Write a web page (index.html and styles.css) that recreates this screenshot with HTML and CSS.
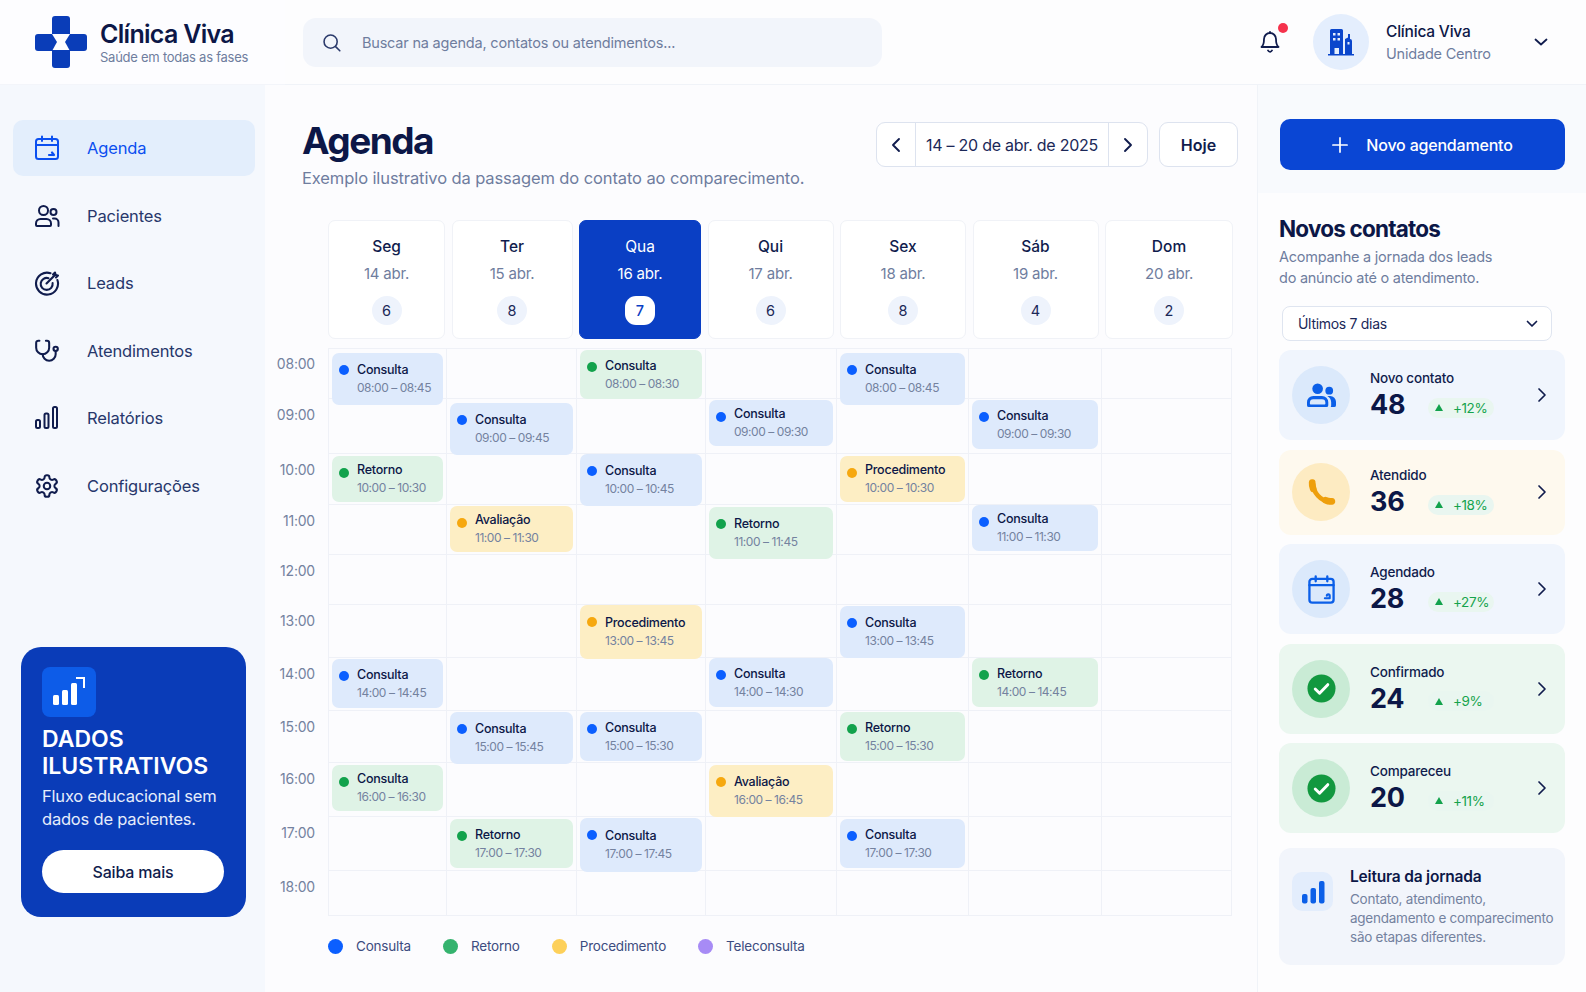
FILE: index.html
```html
<!DOCTYPE html>
<html lang="pt-BR">
<head>
  <meta charset="UTF-8">
  <meta name="viewport" content="width=device-width, initial-scale=1.0">
  <title>Clínica Viva - Agenda</title>
  <link rel="stylesheet" href="styles.css">
</head>
<body>
<header class="top">
  <div class="brand">
    <svg class="logo" viewBox="0 0 52 52" fill="#0a3db8">
      <path d="M17 3a3 3 0 0 1 3-3h12a3 3 0 0 1 3 3v15H17z"/>
      <path d="M17 34h18v15a3 3 0 0 1-3 3H20a3 3 0 0 1-3-3z"/>
      <path d="M0 21a3 3 0 0 1 3-3h14l5 8-5 9H3a3 3 0 0 1-3-3z"/>
      <path d="M52 21a3 3 0 0 0-3-3H35l-5 8 5 9h14a3 3 0 0 0 3-3z"/>
    </svg>
    <div>
      <div class="brand-name">Clínica Viva</div>
      <div class="brand-sub">Saúde em todas as fases</div>
    </div>
  </div>
  <div class="topbar">
    <div class="search">
      <svg class="ic-search" viewBox="0 0 24 24" fill="none" stroke="#2b3a6b" stroke-width="1.8" stroke-linecap="round"><circle cx="11" cy="11" r="7.5"/><path d="m17 17 4.5 4.5"/></svg>
      <span>Buscar na agenda, contatos ou atendimentos...</span>
    </div>
    <div class="bell">
      <svg viewBox="0 0 24 24" fill="none" stroke="#101c4d" stroke-width="1.8" stroke-linecap="round" stroke-linejoin="round"><path d="M6 9a6 6 0 0 1 12 0c0 6 2.500 8 2.500 8h-17S6 15 6 9"/><path d="M10 20.500a2.200 2.200 0 0 0 4 0"/><path d="M12 3V1.800"/></svg>
      <i class="bell-dot"></i>
    </div>
    <div class="avatar">
      <svg viewBox="0 0 26 28" fill="#0a46cc"><path d="M2 2.500A1.500 1.500 0 0 1 3.500 1h10A1.500 1.500 0 0 1 15 2.500V26h-4v-6H6.500v6H2z"/><path d="M17 11l3-1.500V6h2v5a2 2 0 0 1 2 2v13h-7z"/><path d="M0 26h26v1.500H0z"/><g fill="#e4eefd"><rect x="5" y="5" width="2.500" height="2.500"/><rect x="9.500" y="5" width="2.500" height="2.500"/><rect x="5" y="10" width="2.500" height="2.500"/><rect x="9.500" y="10" width="2.500" height="2.500"/><rect x="19.500" y="14" width="2" height="2.500"/></g></svg>
    </div>
    <div class="unit">
      <div class="unit-name">Clínica Viva</div>
      <div class="unit-sub">Unidade Centro</div>
    </div>
    <svg class="unit-chev" viewBox="0 0 14 8" fill="none" stroke="#101c4d" stroke-width="1.8" stroke-linecap="round" stroke-linejoin="round"><path d="m1.500 1.500 5.500 5 5.500-5"/></svg>
  </div>
</header>

<div class="layout">
  <aside class="sidebar">
    <nav class="nav">
      <a class="nav-item active">
        <svg viewBox="0 0 26 26" fill="none" stroke="currentColor" stroke-width="2" stroke-linecap="round" stroke-linejoin="round"><rect x="2" y="4" width="22" height="20" rx="2.500"/><path d="M2 10h22M8 1.500V6M18 1.500V6"/><path d="M15 20h5M18 17.500 20 20" stroke-width="2.200"/></svg>
        Agenda
      </a>
      <a class="nav-item">
        <svg viewBox="0 0 26 26" fill="none" stroke="currentColor" stroke-width="2" stroke-linecap="round" stroke-linejoin="round"><circle cx="9.500" cy="7.500" r="4.500"/><circle cx="19.500" cy="9" r="3"/><path d="M2 22v-1.500A4.500 4.500 0 0 1 6.500 16h6a4.500 4.500 0 0 1 4.500 4.500V22a1 1 0 0 1-1 1H3a1 1 0 0 1-1-1z"/><path d="M19 15.500h1.500a4 4 0 0 1 4 4V23"/></svg>
        Pacientes
      </a>
      <a class="nav-item">
        <svg viewBox="0 0 26 26" fill="none" stroke="currentColor" stroke-width="2.100" stroke-linecap="round" stroke-linejoin="round"><path d="M16.500 3.200A11 11 0 1 0 23.400 10"/><path d="M14.500 8.200A6 6 0 1 0 18.600 13"/><path d="M12.500 13.500 21.500 4.500"/><path d="M19 4.500 21 2.500l.5 2.500 2.500.5-2 2"/></svg>
        Leads
      </a>
      <a class="nav-item">
        <svg viewBox="0 0 24 24" fill="none" stroke="currentColor" stroke-width="1.900" stroke-linecap="round" stroke-linejoin="round"><path d="M5 2.500H4a2 2 0 0 0-2 2V9a6 6 0 0 0 12 0V4.500a2 2 0 0 0-2-2h-1"/><path d="M8 15a6 6 0 0 0 12 0v-3"/><circle cx="20" cy="10" r="2"/></svg>
        Atendimentos
      </a>
      <a class="nav-item">
        <svg viewBox="0 0 26 26" fill="none" stroke="#101c4d" stroke-width="2" stroke-linejoin="round"><rect x="2" y="15" width="4" height="8" rx="1.500"/><rect x="10.500" y="8.500" width="4" height="14.500" rx="1.500"/><rect x="19" y="2" width="4" height="21" rx="1.500"/></svg>
        Relatórios
      </a>
      <a class="nav-item">
        <svg viewBox="0 0 24 24" fill="none" stroke="#101c4d" stroke-width="1.900" stroke-linecap="round" stroke-linejoin="round"><path d="M12.220 2h-.44a2 2 0 0 0-2 2v.18a2 2 0 0 1-1 1.730l-.43.25a2 2 0 0 1-2 0l-.15-.08a2 2 0 0 0-2.730.73l-.22.38a2 2 0 0 0 .73 2.730l.15.1a2 2 0 0 1 1 1.720v.51a2 2 0 0 1-1 1.740l-.15.09a2 2 0 0 0-.73 2.730l.22.38a2 2 0 0 0 2.730.73l.15-.08a2 2 0 0 1 2 0l.43.25a2 2 0 0 1 1 1.730V20a2 2 0 0 0 2 2h.44a2 2 0 0 0 2-2v-.18a2 2 0 0 1 1-1.730l.43-.25a2 2 0 0 1 2 0l.15.08a2 2 0 0 0 2.730-.73l.22-.39a2 2 0 0 0-.73-2.730l-.15-.08a2 2 0 0 1-1-1.740v-.5a2 2 0 0 1 1-1.740l.15-.09a2 2 0 0 0 .73-2.730l-.22-.38a2 2 0 0 0-2.730-.73l-.15.08a2 2 0 0 1-2 0l-.43-.25a2 2 0 0 1-1-1.730V4a2 2 0 0 0-2-2z"/><circle cx="12" cy="12" r="3"/></svg>
        Configurações
      </a>
    </nav>
    <div class="promo">
      <div class="promo-icon">
        <svg viewBox="0 0 34 30" fill="#fff"><rect x="1" y="18" width="6" height="10" rx="1.500"/><rect x="10" y="13" width="6" height="15" rx="1.500"/><rect x="19" y="6" width="6" height="22" rx="1.500"/><path d="M24 0h9v11h-2V2h-7z"/></svg>
      </div>
      <h3 class="promo-title">DADOS ILUSTRATIVOS</h3>
      <p class="promo-text">Fluxo educacional sem dados de pacientes.</p>
      <button class="promo-btn">Saiba mais</button>
    </div>
  </aside>

  <main class="main">
    <div class="page-head">
      <div>
        <h1>Agenda</h1>
        <p class="page-sub">Exemplo ilustrativo da passagem do contato ao comparecimento.</p>
      </div>
      <div class="date-tools">
        <div class="date-nav">
          <button class="date-arrow"><svg viewBox="0 0 10 16" fill="none" stroke="#101c4d" stroke-width="1.900" stroke-linecap="round" stroke-linejoin="round"><path d="M8 2 2 8l6 6"/></svg></button>
          <div class="date-range">14 – 20 de abr. de 2025</div>
          <button class="date-arrow"><svg viewBox="0 0 10 16" fill="none" stroke="#101c4d" stroke-width="1.900" stroke-linecap="round" stroke-linejoin="round"><path d="m2 2 6 6-6 6"/></svg></button>
        </div>
        <button class="today">Hoje</button>
      </div>
    </div>

    <div class="days">
      <div class="day"><b>Seg</b><span>14 abr.</span><i>6</i></div>
      <div class="day"><b>Ter</b><span>15 abr.</span><i>8</i></div>
      <div class="day current"><b>Qua</b><span>16 abr.</span><i>7</i></div>
      <div class="day"><b>Qui</b><span>17 abr.</span><i>6</i></div>
      <div class="day"><b>Sex</b><span>18 abr.</span><i>8</i></div>
      <div class="day"><b>Sáb</b><span>19 abr.</span><i>4</i></div>
      <div class="day"><b>Dom</b><span>20 abr.</span><i>2</i></div>
    </div>

    <div class="calendar">
      <div class="hour">08:00</div>
      <div class="cell"><div class="ev blue t4 h-l"><b>Consulta</b><span>08:00 – 08:45</span></div></div>
      <div class="cell"></div>
      <div class="cell"><div class="ev green t1 h-m"><b>Consulta</b><span>08:00 – 08:30</span></div></div>
      <div class="cell"></div>
      <div class="cell"><div class="ev blue t4 h-l"><b>Consulta</b><span>08:00 – 08:45</span></div></div>
      <div class="cell"></div>
      <div class="cell"></div>

      <div class="hour">09:00</div>
      <div class="cell"></div>
      <div class="cell"><div class="ev blue t4 h-l"><b>Consulta</b><span>09:00 – 09:45</span></div></div>
      <div class="cell"></div>
      <div class="cell"><div class="ev blue t1 h-s"><b>Consulta</b><span>09:00 – 09:30</span></div></div>
      <div class="cell"></div>
      <div class="cell"><div class="ev blue t1 h-m"><b>Consulta</b><span>09:00 – 09:30</span></div></div>
      <div class="cell"></div>

      <div class="hour">10:00</div>
      <div class="cell"><div class="ev green t2 h-s"><b>Retorno</b><span>10:00 – 10:30</span></div></div>
      <div class="cell"></div>
      <div class="cell"><div class="ev blue t0 h-l"><b>Consulta</b><span>10:00 – 10:45</span></div></div>
      <div class="cell"></div>
      <div class="cell"><div class="ev amber t2 h-s"><b>Procedimento</b><span>10:00 – 10:30</span></div></div>
      <div class="cell"></div>
      <div class="cell"></div>

      <div class="hour">11:00</div>
      <div class="cell"></div>
      <div class="cell"><div class="ev amber t1 h-s"><b>Avaliação</b><span>11:00 – 11:30</span></div></div>
      <div class="cell"></div>
      <div class="cell"><div class="ev green t2 h-l"><b>Retorno</b><span>11:00 – 11:45</span></div></div>
      <div class="cell"></div>
      <div class="cell"><div class="ev blue t0 h-s"><b>Consulta</b><span>11:00 – 11:30</span></div></div>
      <div class="cell"></div>

      <div class="hour">12:00</div>
      <div class="cell"></div><div class="cell"></div><div class="cell"></div><div class="cell"></div><div class="cell"></div><div class="cell"></div><div class="cell"></div>

      <div class="hour">13:00</div>
      <div class="cell"></div>
      <div class="cell"></div>
      <div class="cell"><div class="ev amber t0 h-xl"><b>Procedimento</b><span>13:00 – 13:45</span></div></div>
      <div class="cell"></div>
      <div class="cell"><div class="ev blue t1 h-l"><b>Consulta</b><span>13:00 – 13:45</span></div></div>
      <div class="cell"></div>
      <div class="cell"></div>

      <div class="hour">14:00</div>
      <div class="cell"><div class="ev blue t1 h-m"><b>Consulta</b><span>14:00 – 14:45</span></div></div>
      <div class="cell"></div>
      <div class="cell"></div>
      <div class="cell"><div class="ev blue t0 h-m"><b>Consulta</b><span>14:00 – 14:30</span></div></div>
      <div class="cell"></div>
      <div class="cell"><div class="ev green t0 h-m"><b>Retorno</b><span>14:00 – 14:45</span></div></div>
      <div class="cell"></div>

      <div class="hour">15:00</div>
      <div class="cell"></div>
      <div class="cell"><div class="ev blue t1 h-l"><b>Consulta</b><span>15:00 – 15:45</span></div></div>
      <div class="cell"><div class="ev blue t1 h-m"><b>Consulta</b><span>15:00 – 15:30</span></div></div>
      <div class="cell"></div>
      <div class="cell"><div class="ev green t1 h-m"><b>Retorno</b><span>15:00 – 15:30</span></div></div>
      <div class="cell"></div>
      <div class="cell"></div>

      <div class="hour">16:00</div>
      <div class="cell"><div class="ev green t2 h-s"><b>Consulta</b><span>16:00 – 16:30</span></div></div>
      <div class="cell"></div>
      <div class="cell"></div>
      <div class="cell"><div class="ev amber t2 h-l"><b>Avaliação</b><span>16:00 – 16:45</span></div></div>
      <div class="cell"></div>
      <div class="cell"></div>
      <div class="cell"></div>

      <div class="hour">17:00</div>
      <div class="cell"></div>
      <div class="cell"><div class="ev green t2 h-m"><b>Retorno</b><span>17:00 – 17:30</span></div></div>
      <div class="cell"><div class="ev blue t1 h-xl"><b>Consulta</b><span>17:00 – 17:45</span></div></div>
      <div class="cell"></div>
      <div class="cell"><div class="ev blue t2 h-m"><b>Consulta</b><span>17:00 – 17:30</span></div></div>
      <div class="cell"></div>
      <div class="cell"></div>

      <div class="hour">18:00</div>
      <div class="cell"></div><div class="cell"></div><div class="cell"></div><div class="cell"></div><div class="cell"></div><div class="cell"></div><div class="cell"></div>
    </div>

    <div class="legend">
      <div class="legend-item"><i class="lg-blue"></i>Consulta</div>
      <div class="legend-item"><i class="lg-green"></i>Retorno</div>
      <div class="legend-item"><i class="lg-amber"></i>Procedimento</div>
      <div class="legend-item"><i class="lg-purple"></i>Teleconsulta</div>
    </div>
  </main>

  <aside class="panel">
    <div class="panel-top">
      <button class="new-btn">
        <svg viewBox="0 0 16 16" fill="none" stroke="#fff" stroke-width="1.700" stroke-linecap="round"><path d="M8 .9v14.200M.9 8h14.200"/></svg>
        Novo agendamento
      </button>
    </div>
    <div class="panel-body">
      <h2>Novos contatos</h2>
      <p class="panel-sub">Acompanhe a jornada dos leads<br>do anúncio até o atendimento.</p>
      <div class="select">
        Últimos 7 dias
        <svg viewBox="0 0 12 8" fill="none" stroke="#101c4d" stroke-width="1.700" stroke-linecap="round" stroke-linejoin="round"><path d="m1.500 1.500 4.500 4.500 4.500-4.500"/></svg>
      </div>

      <div class="stats">
        <div class="stat st-blue">
          <div class="stat-ic">
            <svg viewBox="0 0 30 26" fill="#0b5fe8"><circle cx="11" cy="6" r="5.500"/><circle cx="23" cy="8" r="4"/><path fill-rule="evenodd" d="M0 20a6.500 6.500 0 0 1 6.500-6.500h9A6.500 6.500 0 0 1 22 20v3a2 2 0 0 1-2 2H2a2 2 0 0 1-2-2zM3 20.500v1a.8.8 0 0 0 .8.8h14.400a.8.8 0 0 0 .8-.8v-1a3.500 3.500 0 0 0-3.500-3.500h-9A3.500 3.500 0 0 0 3 20.500z"/><path d="M21 13.500h3a6 6 0 0 1 6 6V23a2 2 0 0 1-2 2h-3.500a4 4 0 0 0 .5-2v-3a8 8 0 0 0-4-6.500z"/></svg>
          </div>
          <div class="stat-info">
            <div class="stat-label">Novo contato</div>
            <div class="stat-row"><strong>48</strong><span class="trend"><i></i>+12%</span></div>
          </div>
          <svg class="stat-chev" viewBox="0 0 10 16" fill="none" stroke="#101c4d" stroke-width="1.700" stroke-linecap="round" stroke-linejoin="round"><path d="m2 2 6 6-6 6"/></svg>
        </div>

        <div class="stat stat-short st-amber">
          <div class="stat-ic">
            <svg viewBox="0 0 28 28" fill="none" stroke="#ee9f0c" stroke-linecap="round"><path d="M6 6c0 8 7 16 16 17" stroke-width="4.500"/><path d="M5 4.500c-.2 2 .3 4 1 6" stroke-width="6.500"/><path d="M18 21.500c2 1 4 1.300 6 1" stroke-width="6.500"/></svg>
          </div>
          <div class="stat-info">
            <div class="stat-label">Atendido</div>
            <div class="stat-row"><strong>36</strong><span class="trend"><i></i>+18%</span></div>
          </div>
          <svg class="stat-chev" viewBox="0 0 10 16" fill="none" stroke="#101c4d" stroke-width="1.700" stroke-linecap="round" stroke-linejoin="round"><path d="m2 2 6 6-6 6"/></svg>
        </div>

        <div class="stat st-blue">
          <div class="stat-ic">
            <svg viewBox="0 0 28 30" fill="none" stroke="#0b5fe8" stroke-width="2.400" stroke-linecap="round" stroke-linejoin="round"><rect x="1.500" y="4" width="25" height="24.500" rx="3"/><path d="M1.500 10.500h25M8 1.500v5M20 1.500v5"/><path d="M17.500 24h5v-2.500a1.500 1.500 0 0 0-3 0" stroke-width="2.200"/></svg>
          </div>
          <div class="stat-info">
            <div class="stat-label">Agendado</div>
            <div class="stat-row"><strong>28</strong><span class="trend"><i></i>+27%</span></div>
          </div>
          <svg class="stat-chev" viewBox="0 0 10 16" fill="none" stroke="#101c4d" stroke-width="1.700" stroke-linecap="round" stroke-linejoin="round"><path d="m2 2 6 6-6 6"/></svg>
        </div>

        <div class="stat st-green">
          <div class="stat-ic">
            <svg viewBox="0 0 30 30"><circle cx="15" cy="15" r="14.500" fill="#12983f"/><path d="m8.500 15.500 4.500 4.500 8.500-9" fill="none" stroke="#fff" stroke-width="3" stroke-linecap="round" stroke-linejoin="round"/></svg>
          </div>
          <div class="stat-info">
            <div class="stat-label">Confirmado</div>
            <div class="stat-row"><strong>24</strong><span class="trend"><i></i>+9%</span></div>
          </div>
          <svg class="stat-chev" viewBox="0 0 10 16" fill="none" stroke="#101c4d" stroke-width="1.700" stroke-linecap="round" stroke-linejoin="round"><path d="m2 2 6 6-6 6"/></svg>
        </div>

        <div class="stat st-green">
          <div class="stat-ic">
            <svg viewBox="0 0 30 30"><circle cx="15" cy="15" r="14.500" fill="#12983f"/><path d="m8.500 15.500 4.500 4.500 8.500-9" fill="none" stroke="#fff" stroke-width="3" stroke-linecap="round" stroke-linejoin="round"/></svg>
          </div>
          <div class="stat-info">
            <div class="stat-label">Compareceu</div>
            <div class="stat-row"><strong>20</strong><span class="trend"><i></i>+11%</span></div>
          </div>
          <svg class="stat-chev" viewBox="0 0 10 16" fill="none" stroke="#101c4d" stroke-width="1.700" stroke-linecap="round" stroke-linejoin="round"><path d="m2 2 6 6-6 6"/></svg>
        </div>
      </div>

      <div class="note">
        <div class="note-ic">
          <svg viewBox="0 0 24 24" fill="#0b5fe8"><rect x="1" y="14" width="5.500" height="9.500" rx="2"/><rect x="9.500" y="8" width="5.500" height="15.500" rx="2"/><rect x="18" y="1" width="5.500" height="22.500" rx="2"/></svg>
        </div>
        <div>
          <div class="note-title">Leitura da jornada</div>
          <p class="note-text">Contato, atendimento, agendamento e comparecimento são etapas diferentes.</p>
        </div>
      </div>
    </div>
  </aside>
</div>
</body>
</html>
```

FILE: styles.css
```css
* {
  box-sizing: border-box;
}
body {
  margin: 0;
  width: 1586px;
  height: 992px;
  overflow: hidden;
  font-family: Inter, "Noto Sans", sans-serif;
  background: #fcfcfe;
  color: #101c4d;
}
button {
  font-family: inherit;
  cursor: pointer;
}
h1, h2, h3, p {
  margin: 0;
}

/* top */
.top {
  display: flex;
  height: 85px;
}
.brand {
  width: 285px;
  display: flex;
  align-items: center;
  gap: 13px;
  padding-left: 35px;
  background: #fdfdff;
  border-bottom: 1px solid #f3f5fa;
}
.logo {
  width: 52px;
  height: 52px;
  flex: none;
}
.brand-name {
  font-size: 25px;
  line-height: 30px;
  font-weight: 600;
  letter-spacing: -0.7px;
  color: #0c1747;
}
.brand-sub {
  font-size: 13px;
  line-height: 16px;
  letter-spacing: -0.25px;
  color: #6f7d9e;
}
.topbar {
  flex: 1;
  display: flex;
  align-items: center;
  padding-left: 18px;
  background: #fdfdfe;
  border-bottom: 1px solid #f0f3f8;
}
.search {
  width: 579px;
  height: 49px;
  display: flex;
  align-items: center;
  gap: 20px;
  padding-left: 18px;
  border-radius: 13px;
  background: #f2f5fb;
  font-size: 14.500px;
  letter-spacing: -0.2px;
  color: #6f7d9e;
}
.ic-search {
  width: 21px;
  height: 21px;
}
.bell {
  position: relative;
  width: 24px;
  height: 26px;
  margin-left: 376px;
}
.bell svg {
  width: 24px;
  height: 26px;
  display: block;
}
.bell-dot {
  position: absolute;
  top: -6px;
  right: -6px;
  width: 10px;
  height: 10px;
  border-radius: 50%;
  background: #f5324c;
}
.avatar {
  width: 56px;
  height: 56px;
  margin-left: 31px;
  border-radius: 50%;
  display: flex;
  align-items: center;
  justify-content: center;
  background: #e4eefd;
}
.avatar svg {
  width: 26px;
  height: 28px;
}
.unit {
  margin-left: 17px;
  width: 148px;
}
.unit-name {
  font-size: 15.500px;
  line-height: 22px;
  font-weight: 500;
  letter-spacing: -0.2px;
  color: #0c1747;
}
.unit-sub {
  font-size: 14.500px;
  line-height: 21px;
  letter-spacing: -0.2px;
  color: #6f7d9e;
}
.unit-chev {
  width: 14px;
  height: 8px;
}

/* page columns */
.layout {
  display: grid;
  grid-template-columns: 265px 992px 329px;
  height: 907px;
}

/* sidebar */
.sidebar {
  display: flex;
  flex-direction: column;
  background: #f5f8fd;
}
.nav {
  display: flex;
  flex-direction: column;
  gap: 11.500px;
  padding: 35px 10px 0 13px;
}
.nav-item {
  height: 56px;
  display: flex;
  align-items: center;
  gap: 27px;
  padding-left: 21px;
  border-radius: 10px;
  font-size: 16.500px;
  letter-spacing: -0.15px;
  color: #27376b;
}
.nav-item svg {
  width: 26px;
  height: 26px;
  flex: none;
  color: #101c4d;
}
.nav-item.active {
  background: #e3eefc;
  color: #0b4ff0;
}
.nav-item.active svg {
  color: #0b4ff0;
}
.promo {
  width: 225px;
  height: 270px;
  margin: auto 0 75px 21px;
  padding: 20px 21px;
  border-radius: 20px;
  background: #0a3cb8;
  color: #fff;
}
.promo-icon {
  width: 54px;
  height: 50px;
  display: flex;
  align-items: center;
  justify-content: center;
  border-radius: 8px;
  background: #0d5ce8;
}
.promo-icon svg {
  width: 34px;
  height: 30px;
}
.promo-title {
  margin-top: 9px;
  font-size: 23px;
  line-height: 27px;
  font-weight: 600;
}
.promo-text {
  margin-top: 5px;
  font-size: 16.500px;
  line-height: 23px;
  letter-spacing: -0.2px;
  color: #e6edfb;
}
.promo-btn {
  width: 182px;
  height: 43px;
  margin-top: 19px;
  border: none;
  border-radius: 22px;
  background: #fff;
  font-size: 16px;
  font-weight: 500;
  letter-spacing: -0.2px;
  color: #101c4d;
}

/* main */
.page-head {
  height: 135px;
  display: flex;
  justify-content: space-between;
  padding: 34px 19px 0 37px;
}
h1 {
  font-size: 37px;
  line-height: 44px;
  font-weight: 700;
  letter-spacing: -1.500px;
  color: #0c1747;
}
.page-sub {
  margin-top: 4px;
  font-size: 16.500px;
  line-height: 22px;
  letter-spacing: -0.1px;
  color: #6f7d9e;
}
.date-tools {
  display: flex;
  gap: 11px;
  margin-top: 3px;
}
.date-nav {
  height: 45px;
  width: 272px;
  display: flex;
  border: 1px solid #dde3ef;
  border-radius: 9px;
  background: #fff;
}
.date-arrow {
  width: 38px;
  border: none;
  background: none;
  display: flex;
  align-items: center;
  justify-content: center;
  padding: 0;
}
.date-arrow svg {
  width: 10px;
  height: 16px;
}
.date-range {
  flex: 1;
  display: flex;
  align-items: center;
  justify-content: center;
  border-left: 1px solid #dde3ef;
  border-right: 1px solid #dde3ef;
  font-size: 16px;
  letter-spacing: -0.25px;
  color: #1b2858;
}
.today {
  width: 79px;
  height: 45px;
  border: 1px solid #dde3ef;
  border-radius: 9px;
  background: #fff;
  font-size: 16px;
  font-weight: 600;
  color: #101c4d;
}

/* week header */
.days {
  display: grid;
  grid-template-columns: 117px 121px 122px 126px 126px 126px 128px;
  gap: 6.500px;
  margin-left: 63px;
  height: 119px;
}
.day {
  display: flex;
  flex-direction: column;
  align-items: center;
  padding-top: 15px;
  border: 1px solid #f0f2f7;
  border-radius: 7px;
  background: #fff;
}
.day b {
  font-size: 15.500px;
  line-height: 22px;
  font-weight: 500;
  color: #101c4d;
}
.day span {
  margin-top: 5px;
  font-size: 15px;
  line-height: 22px;
  letter-spacing: -0.2px;
  color: #6f7d9e;
}
.day i {
  width: 30px;
  height: 29px;
  margin-top: 11px;
  border-radius: 50%;
  display: flex;
  align-items: center;
  justify-content: center;
  font-style: normal;
  font-size: 14.500px;
  background: #eef3fc;
  color: #1b2858;
}
.day.current {
  border-color: #0a3fc4;
  background: #0a3fc4;
}
.day.current b {
  font-weight: 400;
  color: #fff;
}
.day.current span {
  color: #fff;
}
.day.current i {
  border-radius: 11px;
  background: #fff;
  color: #0a3fc4;
  font-weight: 500;
}

/* calendar */
.calendar {
  display: grid;
  grid-template-columns: 63px 119px 130px 129px 131px 132px 133px 130px;
  grid-template-rows: 51px 55px 51px 50px 50px 53px 53px 52px 54px 54px 45px;
  margin-top: 9px;
}
.hour {
  padding: 7px 13px 0 0;
  text-align: right;
  font-size: 14px;
  line-height: 17px;
  letter-spacing: -0.2px;
  color: #74829f;
}
.cell {
  border-right: 1px solid #eff1f7;
  border-bottom: 1px solid #eff1f7;
}
.hour + .cell {
  border-left: 1px solid #eff1f7;
}
.calendar .cell:nth-child(-n+8) {
  border-top: 1px solid #eff1f7;
}
.ev {
  position: relative;
  display: flex;
  flex-direction: column;
  justify-content: center;
  margin: 0 3px 0 3px;
  padding-left: 25px;
  border-radius: 7px;
  z-index: 1;
}
.ev::before {
  content: "";
  position: absolute;
  left: 7px;
  top: 12px;
  width: 10px;
  height: 10px;
  border-radius: 50%;
}
.ev b {
  font-size: 12.500px;
  line-height: 16px;
  font-weight: 500;
  letter-spacing: -0.25px;
  color: #0c1747;
}
.ev span {
  margin-top: 2px;
  font-size: 12px;
  line-height: 16px;
  letter-spacing: -0.45px;
  color: #74829f;
}
.ev.blue {
  background: #deeafc;
}
.ev.blue::before {
  background: #0b5fff;
}
.ev.green {
  background: #dff3e6;
}
.ev.green::before {
  background: #12a24c;
}
.ev.amber {
  background: #fdeec4;
}
.ev.amber::before {
  background: #f6a80f;
}
.t0 {
  margin-top: 0;
}
.t1 {
  margin-top: 1px;
}
.t2 {
  margin-top: 2px;
}
.t4 {
  margin-top: 4px;
}
.h-s {
  height: 46px;
}
.h-m {
  height: 49px;
}
.h-l {
  height: 52px;
}
.h-xl {
  height: 54px;
}

/* legend */
.legend {
  display: flex;
  gap: 32px;
  margin: 20px 0 0 63px;
}
.legend-item {
  display: flex;
  align-items: center;
  gap: 13px;
  font-size: 13.500px;
  line-height: 20px;
  letter-spacing: -0.2px;
  color: #3c4c80;
}
.legend-item i {
  width: 15px;
  height: 15px;
  border-radius: 50%;
}
.lg-blue {
  background: #0b5fff;
}
.lg-green {
  background: #35b36e;
}
.lg-amber {
  background: #fdd05a;
}
.lg-purple {
  background: #a78bf5;
}

/* right panel */
.panel {
  border-left: 1px solid #f0f3f8;
  background: #fdfdfe;
}
.panel-top {
  height: 108px;
  padding: 34px 22px 0;
  background: #f8fafd;
}
.new-btn {
  width: 285px;
  height: 51px;
  display: flex;
  align-items: center;
  justify-content: center;
  gap: 18px;
  border: none;
  border-radius: 10px;
  background: #0a46d4;
  font-size: 16px;
  font-weight: 500;
  letter-spacing: -0.2px;
  color: #fff;
}
.new-btn svg {
  width: 16px;
  height: 16px;
}
.panel-body {
  padding: 22px 21px 0 21px;
}
h2 {
  font-size: 22.500px;
  line-height: 28px;
  font-weight: 700;
  letter-spacing: -0.8px;
  color: #0c1747;
}
.panel-sub {
  margin-top: 3px;
  font-size: 14.500px;
  line-height: 21px;
  letter-spacing: -0.25px;
  color: #6f7d9e;
}
.select {
  width: 270px;
  height: 35px;
  display: flex;
  align-items: center;
  justify-content: space-between;
  margin: 18px 0 9px 3px;
  padding: 0 13px 0 15px;
  border: 1px solid #dfe5f0;
  border-radius: 8px;
  background: #fff;
  font-size: 14px;
  letter-spacing: -0.3px;
  color: #1b2858;
}
.select svg {
  width: 12px;
  height: 8px;
}
.stats {
  display: flex;
  flex-direction: column;
  gap: 9.500px;
}
.stat {
  height: 90px;
  display: flex;
  align-items: center;
  padding: 0 18px 0 13px;
  border-radius: 12px;
}
.stat-short {
  height: 85px;
}
.stat-ic {
  width: 58px;
  height: 58px;
  flex: none;
  border-radius: 50%;
  display: flex;
  align-items: center;
  justify-content: center;
}
.stat-info {
  flex: 1;
  margin-left: 20px;
}
.stat-label {
  font-size: 13.500px;
  line-height: 18px;
  font-weight: 500;
  letter-spacing: -0.2px;
  color: #101c4d;
}
.stat-row {
  display: flex;
  align-items: center;
  margin-top: 2px;
}
.stat-row strong {
  width: 58px;
  font-size: 27px;
  line-height: 32px;
  font-weight: 700;
  letter-spacing: -0.3px;
  color: #0c1747;
}
.trend {
  width: 66px;
  height: 20px;
  display: flex;
  align-items: center;
  gap: 10px;
  padding-left: 7px;
  margin-top: 5px;
  border-radius: 10px;
  background: #e9f6f0;
  font-size: 13.500px;
  letter-spacing: -0.4px;
  color: #15a34c;
}
.trend i {
  width: 0;
  height: 0;
  border-left: 4.500px solid transparent;
  border-right: 4.500px solid transparent;
  border-bottom: 7px solid #12a24c;
}
.stat-chev {
  width: 10px;
  height: 16px;
  flex: none;
}
.st-blue {
  background: #f0f5fd;
}
.st-blue .stat-ic {
  background: #dbe9fb;
}
.st-amber {
  background: #fef9ee;
}
.st-amber .stat-ic {
  background: #fdebc2;
}
.st-green {
  background: #ebf7f0;
}
.st-green .stat-ic {
  background: #c9ebd5;
}
.st-blue .stat-ic svg, .st-amber .stat-ic svg, .st-green .stat-ic svg {
  width: 29px;
  height: 29px;
}
.note {
  display: flex;
  gap: 17px;
  height: 117px;
  margin-top: 15px;
  padding: 24px 10px 0 13px;
  border-radius: 12px;
  background: #f2f5fb;
}
.note-ic {
  width: 41px;
  height: 39px;
  flex: none;
  display: flex;
  align-items: center;
  justify-content: center;
  border-radius: 10px;
  background: #e3edfc;
}
.note-ic svg {
  width: 24px;
  height: 24px;
}
.note-title {
  margin-top: -6px;
  font-size: 15.500px;
  line-height: 21px;
  font-weight: 600;
  letter-spacing: -0.2px;
  color: #0c1747;
}
.note-text {
  margin-top: 3px;
  font-size: 13.500px;
  line-height: 19px;
  letter-spacing: -0.25px;
  color: #74829f;
}
```
